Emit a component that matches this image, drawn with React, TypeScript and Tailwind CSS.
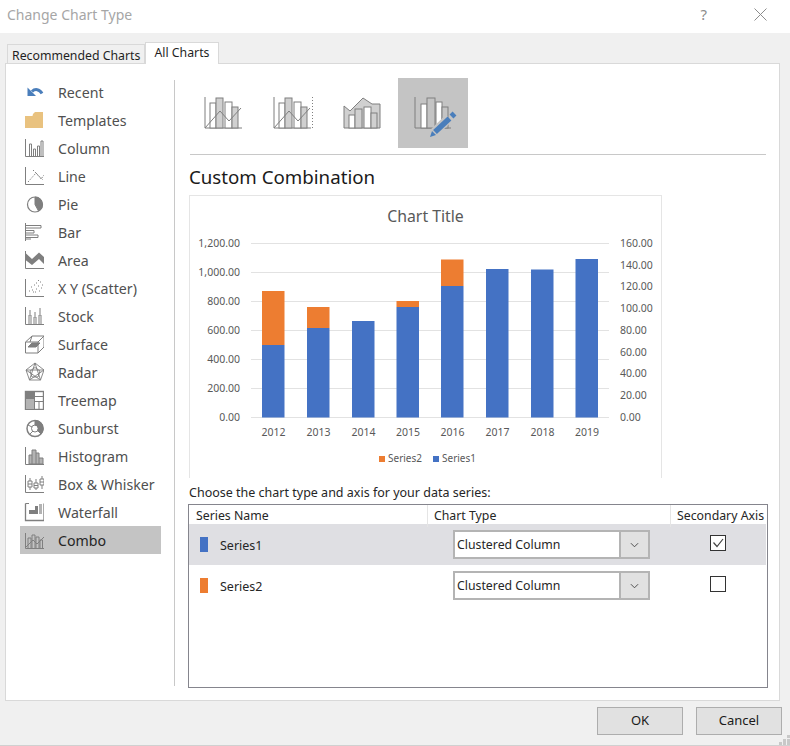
import React from 'react';

const S = '#7f7f7f';
const G = '#b3b3b3';

const sidebarIcons: Record<string, React.ReactNode> = {
  Recent: (
    <g>
      <path d="M8 9.5C11 6.5 15.5 7 18 11.5" fill="none" stroke="#4a7ebb" strokeWidth="3" />
      <path d="M3.5 5.5V14H12L9.5 11.5L6.5 8.5Z" fill="#4a7ebb" />
    </g>
  ),
  Templates: <path d="M1 6H8.5L9 4L11 2H19V18H1Z" fill="#e9c27f" />,
  Column: (
    <g fill="none" stroke={S}>
      <path d="M1.5 1V18.5H20" />
      <path d="M5.5 18V6H7.5V18M9.5 18V11H11.5V18M13.5 18V8H15.5V18M17 18V3H19V18" />
    </g>
  ),
  Line: (
    <g fill="none" stroke={S}>
      <path d="M1.5 1V18.5H20" />
      <path d="M4 16L12 7L17 13L20 9" strokeDasharray="1.5 1.5" />
      <path d="M9 4L19 14" strokeDasharray="1.5 1.5" />
    </g>
  ),
  Pie: (
    <g stroke={S}>
      <circle cx="11" cy="10.5" r="7.5" fill="none" strokeWidth="1.2" />
      <path d="M11 10.5V3A7.5 7.5 0 0 1 14.5 17Z" fill={S} />
    </g>
  ),
  Bar: (
    <g fill="none" stroke={S}>
      <path d="M1.5 1V19" />
      <path d="M2 3.5H17V6H2M2 8.5H10V11H2M2 13H14V15.5H2M2 17H7" />
    </g>
  ),
  Area: (
    <g>
      <path d="M1.5 3L8 9L15 2.5L20 7V14L15 9L8 15L1.5 10Z" fill={S} />
      <path d="M1.5 1V18.5H20" fill="none" stroke={S} />
    </g>
  ),
  'X Y (Scatter)': (
    <g>
      <path d="M1.5 1V18.5H20" fill="none" stroke={S} />
      <path d="M5 13h1M7 9h1M9 14h1M10 7h1M12 11h1M12 5h1M14 8h1M15 13h1M16 4h1M17 10h1M8 12h1M11 14h1M14 2.5h1M18 7h1" stroke={S} strokeDasharray="1 1" />
    </g>
  ),
  Stock: (
    <g fill="none" stroke={S}>
      <path d="M1.5 1V18.5H20" />
      <path d="M5 18V9H7V18M10 18V11H12V18M15 18V9H17V18M6 8V4M11 10V6M16 8V2" />
    </g>
  ),
  Surface: (
    <g stroke={S} fill="none">
      <path d="M1.5 8L8 2H20V13L14 19H1.5Z" />
      <path d="M1.5 8H14V19M14 8L20 2" />
      <path d="M4 13L8 9H16L12 13Z" fill={S} />
      <path d="M8 2L6 8" />
    </g>
  ),
  Radar: (
    <g stroke={S} fill="none" strokeWidth="0.9">
      <path d="M11 1L20 8L16.5 18H5.5L2 8Z" />
      <path d="M11 5.5L16 9L14 15H8L6 9Z" />
      <path d="M11 1L16.5 18M11 1L5.5 18M2 8H20M2 8L16.5 18M20 8L5.5 18" />
    </g>
  ),
  Treemap: (
    <g stroke={S}>
      <rect x="1.5" y="1.5" width="18" height="18" fill="none" strokeWidth="1.4" />
      <rect x="1.5" y="1.5" width="9" height="7" fill={S} />
      <rect x="1.5" y="8.5" width="9" height="11" fill={G} />
      <path d="M10.5 6.5H19.5M15 11.5V19.5M10.5 11.5H19.5" fill="none" />
    </g>
  ),
  Sunburst: (
    <g stroke={S} fill="none">
      <circle cx="11" cy="10.5" r="8" strokeWidth="1.5" />
      <path d="M11 2.5A8 8 0 0 1 17 16L13.5 12.5A3.5 3.5 0 0 0 11 7Z" fill={S} />
      <circle cx="11" cy="10.5" r="3.5" />
      <path d="M4 7L8 9M6 16L9 13" />
    </g>
  ),
  Histogram: (
    <g stroke={S}>
      <path d="M1.5 1V18.5H20" fill="none" />
      <path d="M5 18V9H8V4H12V7H15V12H19V18Z" fill={G} />
      <path d="M8 9V18M12 7V18M15 12V18" fill="none" />
    </g>
  ),
  'Box & Whisker': (
    <g fill="none" stroke={S}>
      <path d="M1.5 1V18.5H20" />
      <path d="M4 7H8V13H4ZM4 10H8M6 4V7M6 13V16M10 9H14V14H10ZM10 11.5H14M12 5V9M12 14V16M16 5H20V11H16ZM16 8H20M18 2V5M18 11V15" />
    </g>
  ),
  Waterfall: (
    <g>
      <path d="M1.5 1.5V18.5H20M20 1.5V18.5" fill="none" stroke={S} strokeWidth="1.3" />
      <path d="M1.5 1.5H5" stroke={S} fill="none" />
      <path d="M5 8H13V12H5Z" fill={S} />
      <path d="M11 4H14V12H11Z" fill={S} />
      <path d="M15 2H18V12H15Z" fill={G} />
    </g>
  ),
  Combo: (
    <g fill="none" stroke={S}>
      <path d="M1.5 3V18.5H20" />
      <path d="M4 18V8H7V18M8 18V5H11V18M12 18V7H15V18M16 18V10H18.5V18" />
      <path d="M2 17L9 10L13 14L20 7" />
    </g>
  ),
};

const chartTypes = [
  'Recent', 'Templates', 'Column', 'Line', 'Pie', 'Bar', 'Area', 'X Y (Scatter)', 'Stock',
  'Surface', 'Radar', 'Treemap', 'Sunburst', 'Histogram', 'Box & Whisker', 'Waterfall', 'Combo',
];

const Bars = ({ dx = 0, fill = '#d0d0d0' }: { dx?: number; fill?: string }) => (
  <g stroke={S}>
    <path d={`M${17 + dx} 19V50H${54 + dx}`} fill="none" />
    <rect x={22 + dx} y="25" width="6" height="25" fill="#fff" />
    <rect x={28 + dx} y="20" width="7" height="30" fill={fill} />
    <rect x={37 + dx} y="24" width="7" height="26" fill="#fff" />
    <rect x={44 + dx} y="29" width="6" height="21" fill={fill} />
  </g>
);

const comboIcons = [
  <svg key="a" viewBox="0 0 70 70" className="w-[70px] h-[70px]">
    <Bars />
    <path d="M17 50L32 33L41 43L53 30" fill="none" stroke={S} />
  </svg>,
  <svg key="b" viewBox="0 0 70 70" className="w-[70px] h-[70px]">
    <Bars dx={-1} />
    <path d="M16 50L31 33L40 43L52 30" fill="none" stroke={S} />
    <path d="M54.5 19V50" stroke={S} strokeDasharray="1 2" />
  </svg>,
  <svg key="c" viewBox="0 0 70 70" className="w-[70px] h-[70px]">
    <path d="M16 28L22 33L35 20L44 26H52V50H16Z" fill="#d0d0d0" stroke={S} />
    <g fill="#fff" stroke={S}>
      <rect x="21" y="37" width="6" height="13" />
      <rect x="36" y="29" width="7" height="21" />
    </g>
    <g fill="#d0d0d0" stroke={S}>
      <rect x="27" y="31" width="7" height="19" />
      <rect x="43" y="35" width="6" height="15" />
    </g>
  </svg>,
  <svg key="d" viewBox="0 0 70 70" className="w-[70px] h-[70px]">
    <path d="M17 19V50H53" fill="none" stroke={S} />
    <g stroke={S}>
      <rect x="23" y="26" width="6" height="24" fill="#fff" />
      <rect x="29" y="20" width="8" height="30" fill="#c4c4c4" />
      <rect x="38" y="24" width="6" height="26" fill="#fff" />
      <rect x="44" y="29" width="6" height="21" fill="#c4c4c4" />
    </g>
    <path d="M36.5 54L51 40" stroke="#c4c4c4" strokeWidth="9" />
    <path d="M37 54L51.5 40.5" stroke="#4a7ebb" strokeWidth="5.5" />
    <path d="M53.5 38.5L56.5 35.5" stroke="#4a7ebb" strokeWidth="5.5" />
    <path d="M32 59L34 53L38 57Z" fill="#4a7ebb" />
  </svg>,
];

const grid = [243.5, 272.5, 301.5, 330.5, 359.5, 388.5, 417.5];
const left = ['1,200.00', '1,000.00', '800.00', '600.00', '400.00', '200.00', '0.00'];
const right: [string, number][] = [
  ['160.00', 243], ['140.00', 265], ['120.00', 286], ['100.00', 308], ['80.00', 330],
  ['60.00', 352], ['40.00', 373], ['20.00', 395], ['0.00', 417],
];
const bars = [
  { year: '2012', x: 262, blue: 345, orange: 291 },
  { year: '2013', x: 307, blue: 328, orange: 307 },
  { year: '2014', x: 352, blue: 321 },
  { year: '2015', x: 396.5, blue: 307, orange: 301 },
  { year: '2016', x: 441, blue: 286, orange: 259.5 },
  { year: '2017', x: 486, blue: 269 },
  { year: '2018', x: 531, blue: 269.5 },
  { year: '2019', x: 575.5, blue: 259 },
];

function Chart() {
  return (
    <svg viewBox="190 196 471 282" className="block w-[471px] h-[282px]" fontFamily="'Noto Sans', sans-serif">
      <text x="425.5" y="221.5" textAnchor="middle" fontSize="15.8" fill="#595959">Chart Title</text>
      {grid.map((y) => (
        <line key={y} x1="251" x2="609" y1={y} y2={y} stroke="#e2e2e2" />
      ))}
      {left.map((t, i) => (
        <text key={t} x="240" y={grid[i] + 3.5} textAnchor="end" fontSize="10.5" fill="#595959">{t}</text>
      ))}
      {right.map(([t, y]) => (
        <text key={t} x="620" y={y + 3.5} fontSize="10.5" fill="#595959">{t}</text>
      ))}
      {bars.map((b) => (
        <g key={b.year}>
          {b.orange !== undefined && <rect x={b.x} y={b.orange} width="22.5" height={b.blue - b.orange} fill="#ed7d31" />}
          <rect x={b.x} y={b.blue} width="22.5" height={417.5 - b.blue} fill="#4472c4" />
          <text x={b.x + 11.5} y="436" textAnchor="middle" fontSize="10.5" fill="#595959">{b.year}</text>
        </g>
      ))}
      <rect x="379" y="456" width="6" height="6" fill="#ed7d31" />
      <text x="388" y="462" fontSize="10" fill="#595959">Series2</text>
      <rect x="433" y="456" width="6" height="6" fill="#4472c4" />
      <text x="442" y="462" fontSize="10" fill="#595959">Series1</text>
    </svg>
  );
}

function SeriesRow({ name, color, checked }: { name: string; color: string; checked?: boolean }) {
  return (
    <div className={`grid grid-cols-[264px_257px_1fr] items-center h-[41px] w-[577px] ${checked ? 'bg-[#dfdfe3]' : ''}`}>
      <div className="flex items-center pl-[11px] gap-[12px] text-[12.5px] text-[#262626]">
        <span className={`w-2 h-[15px] ${color}`} />
        <span className="pt-[3px]">{name}</span>
      </div>
      <div className="flex w-[197px] h-[29px] border-2 border-[#b4b4b4] bg-white">
        <span className="flex-1 pl-[2px] text-[12.3px] leading-[25px] text-[#262626]">Clustered Column</span>
        <span className="flex items-center justify-center w-[29px] bg-[#e1e1e1] border-l-2 border-[#b4b4b4]">
          <svg viewBox="0 0 10 6" className="w-[9px] h-[6px]">
            <path d="M1 1L5 5L9 1" fill="none" stroke="#404040" />
          </svg>
        </span>
      </div>
      <div className="flex justify-start mb-[4px]">
        <span className="flex items-center justify-center w-4 h-4 border border-[#333333] bg-white">
          {checked && (
            <svg viewBox="0 0 14 14" className="w-[14px] h-[14px]">
              <path d="M2.5 6.5L6 10.5L12 3" fill="none" stroke="#444444" strokeWidth="1.2" />
            </svg>
          )}
        </span>
      </div>
    </div>
  );
}

export default function App() {
  return (
    <div className="flex flex-col w-[790px] h-[746px] bg-[#f0f0f0] text-[#262626] font-['Noto_Sans',sans-serif] text-[13px] overflow-hidden">
      <div className="flex items-center justify-between h-[33px] shrink-0 bg-white pl-[7px] pr-[23px] pb-[4px]">
        <span className="text-[14px] text-[#a6a6a6]">Change Chart Type</span>
        <div className="flex items-center gap-[47px]">
          <span className="text-[15px] text-[#8c8c8c]">?</span>
          <svg viewBox="0 0 13 13" className="w-[13px] h-[13px]">
            <path d="M.5 .5L12.5 12.5M12.5 .5L.5 12.5" stroke="#8c8c8c" fill="none" />
          </svg>
        </div>
      </div>

      <div className="flex items-end h-[30px] shrink-0 pl-[7px] relative z-10">
        <div className="h-[20px] mb-[-1px] px-[4px] border border-b-0 border-[#d9d9d9] text-[12.3px] leading-[21px] text-[#1f1f1f] whitespace-nowrap">
          Recommended Charts
        </div>
        <div className="h-[22px] mb-[-1px] pl-[8px] pr-[9px] border border-b-0 border-[#d9d9d9] bg-white text-[12.3px] leading-[20px] text-[#1f1f1f] whitespace-nowrap">
          All Charts
        </div>
      </div>

      <div className="flex h-[638px] shrink-0 w-[775px] ml-[5px] bg-white border border-[#d9d9d9] pt-[16px] pb-[14px]">
        <div className="w-[169px] shrink-0 border-r border-[#c8c8c8] pl-[14px] pr-[13px]">
          <div className="mt-[-2px]">
            {chartTypes.map((t) => (
              <div key={t} className={`flex items-center h-[28px] pl-[4px] gap-[14px] text-[14.2px] ${t === 'Combo' ? 'bg-[#c4c4c4] text-[#262626]' : 'text-[#505050]'}`}>
                <svg viewBox="0 0 20 20" className="w-5 h-5 shrink-0">{sidebarIcons[t]}</svg>
                <span className="pt-[2px]">{t}</span>
              </div>
            ))}
          </div>
        </div>

        <div className="flex-1 pl-[13px] mt-[-2px]">
          <div className="flex h-[70px]">
            {comboIcons.map((icon, i) => (
              <div key={i} className={`w-[70px] h-[70px] ${i === 3 ? 'bg-[#c4c4c4]' : ''}`}>{icon}</div>
            ))}
          </div>
          <div className="ml-[2px] mt-[6px] w-[576px] border-t border-[#c8c8c8]" />
          <h1 className="ml-px mt-[8px] h-[32px] text-[18.7px] leading-[28px] text-[#1a1a1a]">Custom Combination</h1>
          <div className="ml-px w-[473px] h-[283px] border-x border-t border-[#e5e5e5]">
            <Chart />
          </div>
          <p className="ml-px mt-[5px] h-[21px] text-[12.5px] leading-[20px] text-[#262626]">Choose the chart type and axis for your data series:</p>
          <div className="w-[580px] h-[184px] border border-[#85858d]">
            <div className="grid grid-cols-[238px_243px_1fr] h-[19px] text-[12.3px] leading-[22px] text-[#262626]">
              <span className="pl-[7px]">Series Name</span>
              <span className="pl-[6px] border-l border-[#e5e5e5]">Chart Type</span>
              <span className="pl-[6px] border-l border-[#e5e5e5] whitespace-nowrap">Secondary Axis</span>
            </div>
            <SeriesRow name="Series1" color="bg-[#4472c4]" checked />
            <SeriesRow name="Series2" color="bg-[#ed7d31]" />
          </div>
        </div>
      </div>

      <div className="relative flex flex-1 justify-end gap-[13px] pt-[6px] pr-[8px] border-b border-[#d0d0d0]">
        <button className="w-[86px] h-[28px] bg-[#e1e1e1] border border-[#adadad] text-[13px] text-[#1a1a1a]">OK</button>
        <button className="w-[86px] h-[28px] bg-[#e1e1e1] border border-[#adadad] text-[13px] text-[#1a1a1a]">Cancel</button>
        <svg viewBox="0 0 11 11" className="absolute right-0 bottom-0 w-[11px] h-[11px]">
          <path d="M8 1h3v3h-3zM4 5h3v3h-3zM8 5h3v3h-3zM0 8h3v3h-3zM4 8h3v3h-3zM8 8h3v3h-3z" fill="#c8c8c8" />
        </svg>
      </div>
    </div>
  );
}
